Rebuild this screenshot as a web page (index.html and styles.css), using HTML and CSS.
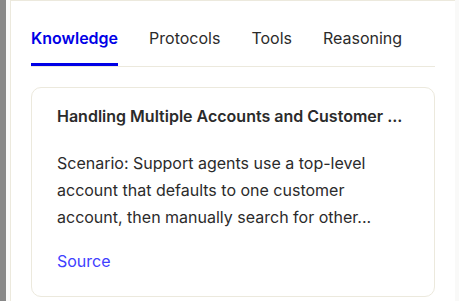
FILE: index.html
```html
<!DOCTYPE html>
<html lang="en">
<head>
<meta charset="utf-8">
<title>Knowledge</title>
<link rel="stylesheet" href="styles.css">
</head>
<body>
<div class="layout">
  <div class="rail"></div>
  <section class="panel">
    <nav class="tabs">
      <a class="tab active">Knowledge</a>
      <a class="tab">Protocols</a>
      <a class="tab">Tools</a>
      <a class="tab">Reasoning</a>
    </nav>
    <article class="card">
      <h3 class="card-title">Handling Multiple Accounts and Customer ...</h3>
      <p class="card-text">Scenario: Support agents use a top-level account that defaults to one customer account, then manually search for other...</p>
      <a class="card-link">Source</a>
    </article>
  </section>
</div>
</body>
</html>
```

FILE: styles.css
```css
html, body {
  margin: 0;
  padding: 0;
  height: 100%;
}
body {
  background: #f9f9f8;
  font-family: Inter, "Noto Sans", sans-serif;
  color: #2b2b2b;
  overflow: hidden;
}
.layout {
  display: flex;
  height: 100%;
}
.rail {
  width: 6px;
  background: #888888;
  margin-right: 4px;
  flex: none;
}
.panel {
  width: 404px;
  flex: none;
  background: #ffffff;
  border-left: 1px solid #ece9dd;
  border-top: 1px solid #ece9dd;
  padding: 25px 20px 0 20px;
}
.tabs {
  display: flex;
  gap: 31px;
  border-bottom: 1px solid #ece9dd;
}
.tab {
  font-size: 16px;
  line-height: 24px;
  padding-bottom: 13px;
  border-bottom: 3px solid transparent;
  color: #2b2b2b;
}
.tab.active {
  color: #0000e6;
  font-weight: 600;
  border-bottom-color: #0000e6;
}
.card {
  margin-top: 20px;
  border: 1px solid #ece9dd;
  border-radius: 10px;
  padding: 16px 24px 23px 25px;
}
.card-title {
  margin: 0;
  font-size: 16px;
  line-height: 24px;
  font-weight: 600;
  white-space: nowrap;
  overflow: hidden;
}
.card-text {
  margin: 22px 0 18px;
  font-size: 16px;
  line-height: 27px;
}
.card-link {
  display: block;
  font-size: 16px;
  line-height: 24px;
  color: #4040ff;
}
```
